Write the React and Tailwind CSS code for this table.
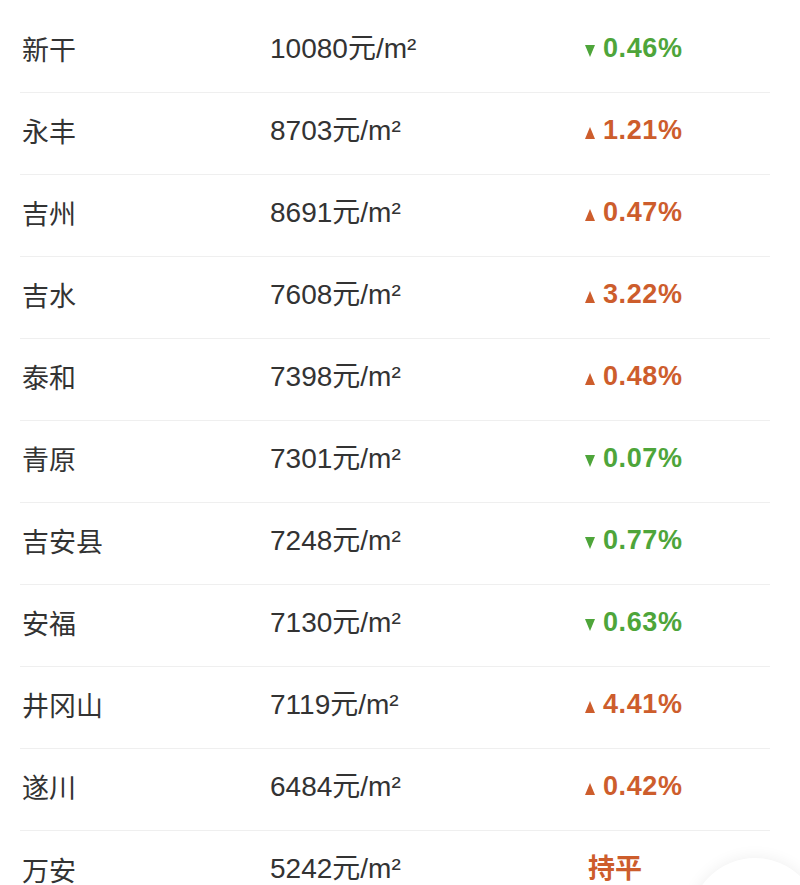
const rows = [
  { name: "新干", price: "10080", dir: "down", pct: "0.46%" },
  { name: "永丰", price: "8703", dir: "up", pct: "1.21%" },
  { name: "吉州", price: "8691", dir: "up", pct: "0.47%" },
  { name: "吉水", price: "7608", dir: "up", pct: "3.22%" },
  { name: "泰和", price: "7398", dir: "up", pct: "0.48%" },
  { name: "青原", price: "7301", dir: "down", pct: "0.07%" },
  { name: "吉安县", price: "7248", dir: "down", pct: "0.77%" },
  { name: "安福", price: "7130", dir: "down", pct: "0.63%" },
  { name: "井冈山", price: "7119", dir: "up", pct: "4.41%" },
  { name: "遂川", price: "6484", dir: "up", pct: "0.42%" },
  { name: "万安", price: "5242", dir: "flat", pct: "持平" },
];

function Change({ dir, pct }) {
  if (dir === "flat") {
    return <span className="text-[27px] font-bold text-[#cd5d2c] pl-[3px] leading-none">{pct}</span>;
  }
  const up = dir === "up";
  return (
    <span
      className={`flex items-center gap-[8px] text-[27px] font-bold tracking-[0.6px] leading-none ${
        up ? "text-[#cd5d2c]" : "text-[#4ea53a]"
      }`}
    >
      <svg width="10" height="12" viewBox="0 0 10 12" className="mt-[5px]">
        {up ? (
          <path d="M5 0 L10 12 L0 12 Z" fill="currentColor" />
        ) : (
          <path d="M0 0 L10 0 L5 12 Z" fill="currentColor" />
        )}
      </svg>
      {pct}
    </span>
  );
}

export default function App() {
  return (
    <div className="relative w-[800px] h-[885px] overflow-hidden bg-white pt-[11px] font-['Liberation_Sans','Noto_Sans_CJK_SC',sans-serif] text-[#333]">
      {rows.map((r, i) => (
        <div
          key={r.name}
          className={`mx-[20px] w-[750px] h-[82px] pb-[6px] flex items-center ${
            i < rows.length - 1 ? "border-b border-[#efefef]" : ""
          }`}
        >
          <div className="w-[250px] pl-[2px] text-[27px] font-['Noto_Sans_CJK_SC',sans-serif] leading-none">
            {r.name}
          </div>
          <div className="w-[315px] text-[28px] leading-none">
            {r.price}元/m²
          </div>
          <Change dir={r.dir} pct={r.pct} />
        </div>
      ))}

      {/* floating button peeking in the corner */}
      <div className="absolute left-[690px] top-[858px] w-[130px] h-[130px] rounded-full bg-white shadow-[0_0_16px_rgba(0,0,0,0.07)]" />
    </div>
  );
}
